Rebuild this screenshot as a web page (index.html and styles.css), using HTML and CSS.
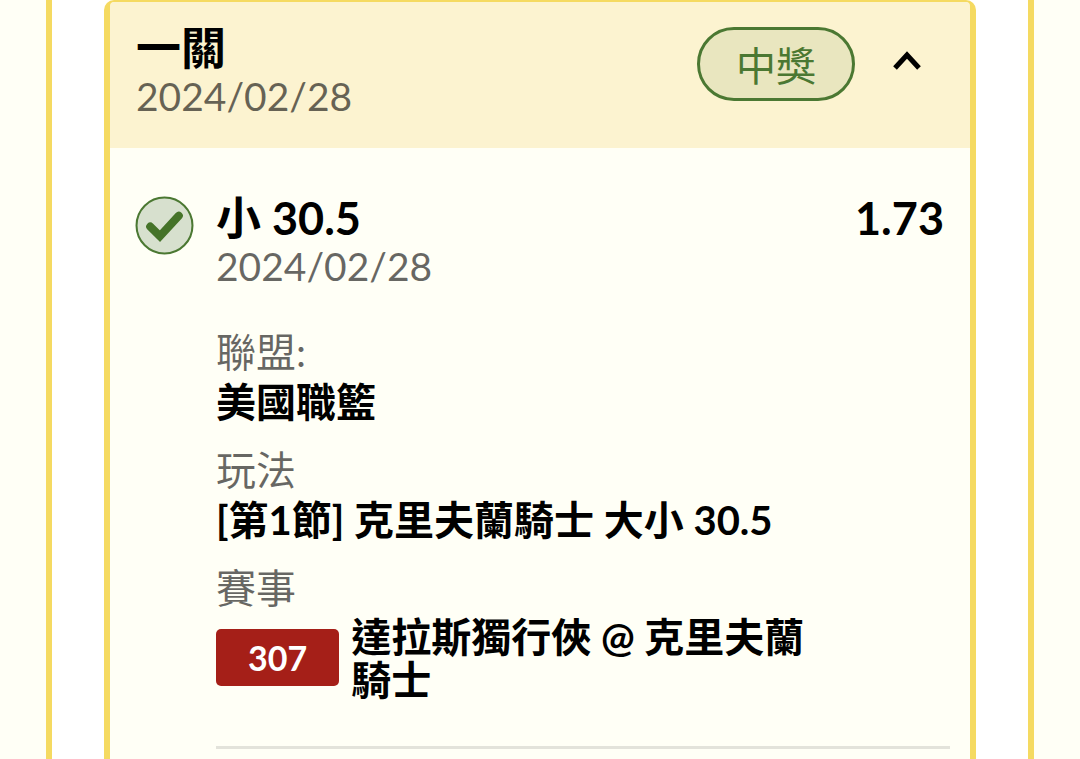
FILE: index.html
```html
<!DOCTYPE html>
<html lang="zh-Hant">
<head>
<meta charset="utf-8">
<meta name="viewport" content="width=device-width, initial-scale=1">
<title>投注紀錄</title>
<link rel="stylesheet" href="styles.css">
</head>
<body>
<main class="panel">
  <article class="bet">
    <header class="bet-header">
      <div>
        <h1 class="title">一關</h1>
        <time class="date" datetime="2024-02-28">2024/02/28</time>
      </div>
      <div class="status">
        <span class="badge">中獎</span>
        <button class="toggle" type="button" aria-label="收合" aria-expanded="true">
          <svg class="chevron" viewBox="0 0 30 22"><path d="M3 19 15 6 27 19"/></svg>
        </button>
      </div>
    </header>
    <section class="selection">
      <svg class="check" viewBox="0 0 58 58" aria-hidden="true">
        <circle cx="29" cy="29" r="27.500"/>
        <path class="tick" d="M15 30 24.500 39.500 43 19.500"/>
      </svg>
      <div class="detail">
        <div class="pick">
          <h2 class="title">小 30.5</h2>
          <span class="title odds">1.73</span>
        </div>
        <time class="date" datetime="2024-02-28">2024/02/28</time>
        <dl class="facts">
          <div class="fact">
            <dt>聯盟:</dt>
            <dd>美國職籃</dd>
          </div>
          <div class="fact">
            <dt>玩法</dt>
            <dd>[第1節] 克里夫蘭騎士 大小 30.5</dd>
          </div>
          <div class="fact">
            <dt>賽事</dt>
            <dd class="match"><span class="code">307</span><span class="teams">達拉斯獨行俠 @ 克里夫蘭騎士</span></dd>
          </div>
        </dl>
      </div>
    </section>
  </article>
</main>
</body>
</html>
```
FILE: styles.css
```css
* {
  box-sizing: border-box;
}

body {
  margin: 0;
  background: #fffff6;
  color: #000;
  font-family: Lato, "Noto Sans CJK TC", sans-serif;
  font-size: 40px;
  line-height: 48px;
}

h1, h2, dl, dd {
  margin: 0;
}

.panel {
  min-height: 100vh;
  margin: 0 46px;
  padding: 0 52px;
  border: solid #f5da61;
  border-width: 0 6px;
  background: #fff;
}

.bet {
  min-height: 100vh;
  border: 6px solid #f5da61;
  border-top-width: 2px;
  border-bottom: 0;
  border-radius: 10px 10px 0 0;
  background: #fffff6;
}

.bet-header {
  display: flex;
  justify-content: space-between;
  align-items: flex-start;
  padding: 22px 48px 28px 26px;
  border-radius: 4px 4px 0 0;
  background: #fcf3d0;
}

.title {
  font-size: 45px;
  line-height: 48px;
  font-weight: 700;
}

.date {
  display: block;
  color: rgba(0, 0, 0, 0.6);
  font-size: 39px;
}

.status {
  display: flex;
  align-items: center;
  gap: 37px;
  padding-top: 3px;
}

.badge {
  padding: 12px 36px 8px;
  border: 3px solid #4b7832;
  border-radius: 38px;
  background: #e9e6bf;
  color: #4b7832;
}

.toggle {
  padding: 0 0 8px;
  border: 0;
  background: none;
  cursor: pointer;
}

.chevron {
  display: block;
  width: 30px;
  fill: none;
  stroke: #000;
  stroke-width: 5;
}

.selection {
  display: flex;
  align-items: flex-start;
  gap: 22px;
  padding: 46px 20px 0 25px;
}

.check {
  flex: none;
  width: 59px;
  margin-top: 2px;
}

.check circle {
  fill: #d7e0ce;
  stroke: #4b7832;
  stroke-width: 2;
}

.tick {
  fill: none;
  stroke: #457329;
  stroke-width: 8;
  stroke-linecap: round;
}

.detail {
  flex: 1;
  padding-bottom: 44px;
  border-bottom: 3px solid #e3e3db;
}

.pick {
  display: flex;
  justify-content: space-between;
}

.odds {
  padding-right: 6px;
}

.facts {
  display: grid;
  gap: 20px;
  margin-top: 38px;
}

dt {
  color: rgba(0, 0, 0, 0.6);
}

dd {
  padding-top: 2px;
  font-weight: 700;
}

.match {
  display: flex;
  align-items: center;
  gap: 12px;
  padding-top: 0;
  line-height: 43px;
}

.code {
  flex: none;
  padding: 7px 32px;
  border-radius: 5px;
  background: #a51f18;
  color: #fff;
  font-size: 34px;
}

.teams {
  max-width: 460px;
  padding-top: 4px;
}
```
